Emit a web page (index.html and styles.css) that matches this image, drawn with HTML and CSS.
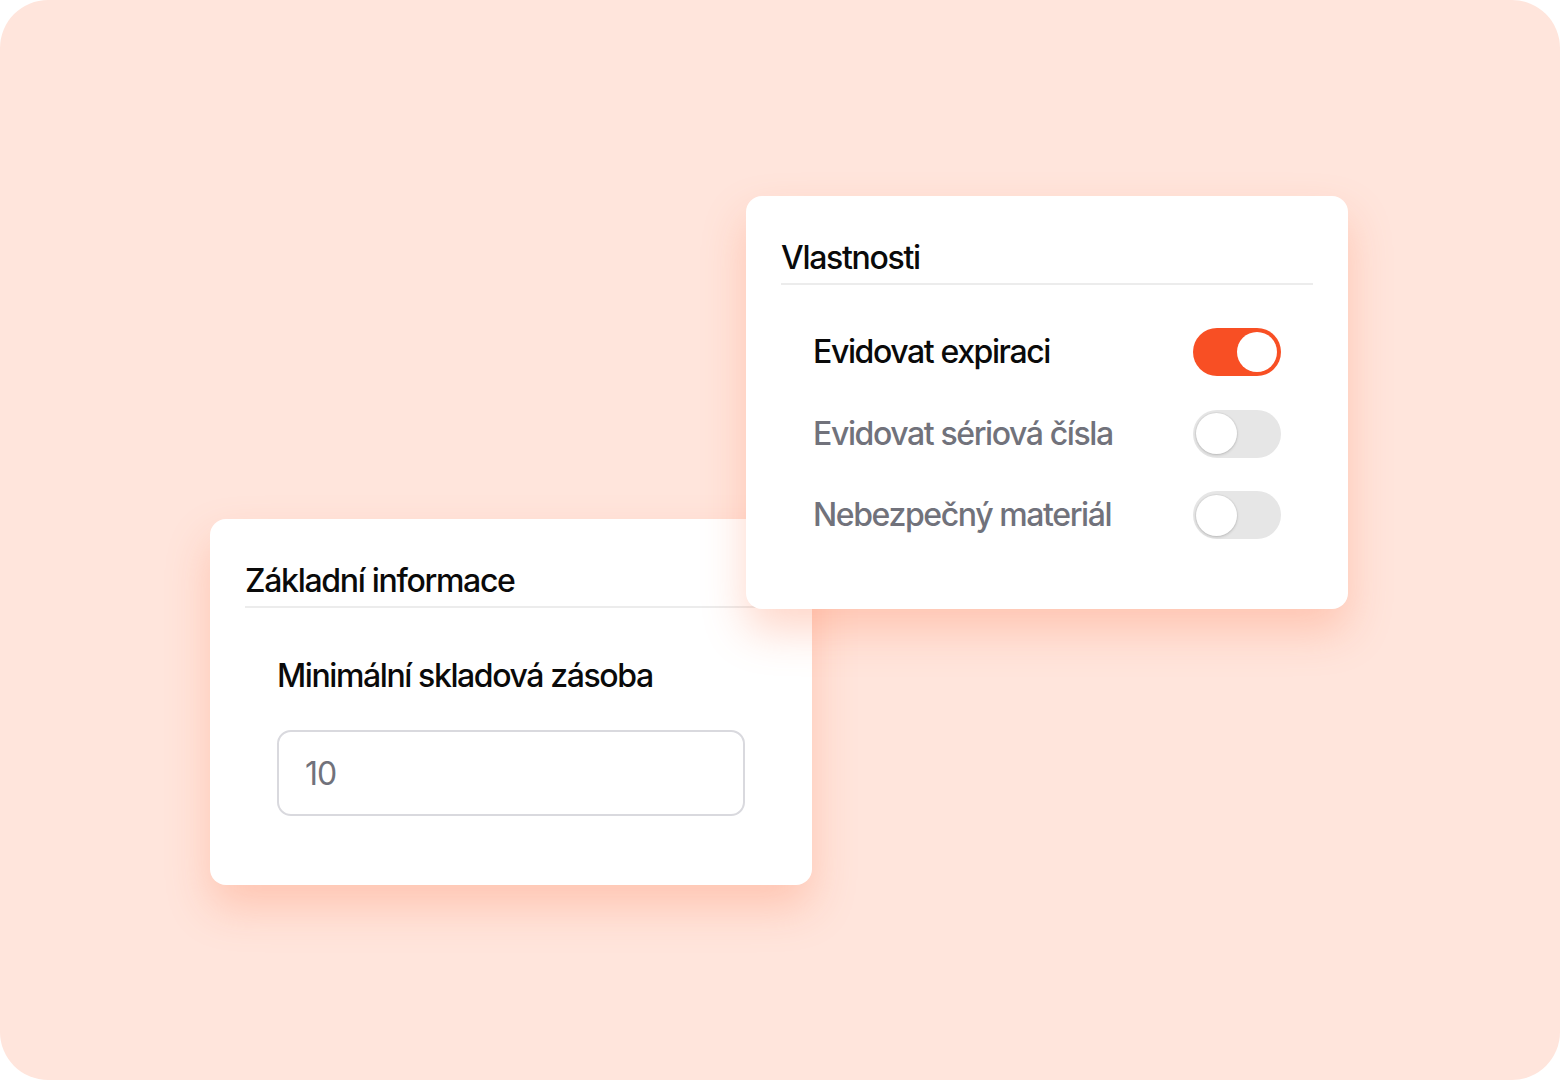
FILE: index.html
```html
<!DOCTYPE html>
<html lang="cs">
<head>
<meta charset="utf-8">
<title>Nastavení</title>
<link rel="stylesheet" href="styles.css">
</head>
<body>
<div class="bg">
  <div class="stage">
    <section class="card card-basic">
      <h2 class="card-title">Základní informace</h2>
      <div class="field">
        <label class="field-label" for="minstock">Minimální skladová zásoba</label>
        <div class="input" id="minstock">10</div>
      </div>
    </section>
    <section class="card card-props">
      <h2 class="card-title">Vlastnosti</h2>
      <div class="rows">
        <div class="row">
          <span class="row-label active">Evidovat expiraci</span>
          <span class="toggle on"><span class="knob"></span></span>
        </div>
        <div class="row">
          <span class="row-label">Evidovat sériová čísla</span>
          <span class="toggle"><span class="knob"></span></span>
        </div>
        <div class="row">
          <span class="row-label">Nebezpečný materiál</span>
          <span class="toggle"><span class="knob"></span></span>
        </div>
      </div>
    </section>
  </div>
</div>
</body>
</html>
```

FILE: styles.css
```css
html, body {
  margin: 0;
  padding: 0;
  background: #ffffff;
}
body {
  font-family: Inter, "Noto Sans", "Liberation Sans", sans-serif;
  -webkit-font-smoothing: antialiased;
}
.bg {
  width: 1560px;
  height: 1080px;
  border-radius: 48px;
  background: #ffe5dc;
  overflow: hidden;
}
.stage {
  display: grid;
}
.card {
  grid-area: 1 / 1;
  width: 602px;
  box-sizing: border-box;
  background: #ffffff;
  border-radius: 16px;
  padding: 0 35px;
  box-shadow: 0 22px 44px rgba(255, 130, 90, 0.32);
  align-self: start;
}
.card-basic {
  margin-left: 210px;
  margin-top: 519px;
  height: 366px;
}
.card-props {
  margin-left: 746px;
  margin-top: 196px;
  height: 413px;
}
.card-title {
  margin: 0;
  padding-top: 42px;
  padding-bottom: 5px;
  font-size: 32px;
  line-height: 40px;
  font-weight: 450;
  letter-spacing: -1.3px;
  color: #0a0a0a;
  border-bottom: 2px solid #ececec;
}
.field {
  padding: 48px 32px 0;
  display: flex;
  flex-direction: column;
  gap: 34px;
}
.field-label {
  font-size: 32px;
  line-height: 40px;
  font-weight: 450;
  letter-spacing: -1.4px;
  color: #0a0a0a;
}
.input {
  height: 86px;
  box-sizing: border-box;
  border: 2px solid #d9d9de;
  border-radius: 14px;
  padding: 0 26px;
  display: flex;
  align-items: center;
  font-size: 32px;
  font-weight: 400;
  letter-spacing: -1px;
  color: #71727b;
}
.rows {
  padding: 43px 32px 0;
  display: flex;
  flex-direction: column;
  gap: 33.5px;
}
.row {
  display: flex;
  align-items: center;
  justify-content: space-between;
  height: 48px;
}
.row-label {
  font-size: 32px;
  line-height: 40px;
  font-weight: 450;
  letter-spacing: -1.4px;
  color: #71727b;
}
.row-label.active {
  color: #0a0a0a;
}
.toggle {
  width: 88px;
  height: 48px;
  border-radius: 24px;
  background: #e6e6e6;
  display: flex;
  align-items: center;
  padding: 0 3px;
  box-sizing: border-box;
}
.toggle .knob {
  width: 41px;
  height: 41px;
  border-radius: 50%;
  background: #ffffff;
  box-shadow: 0 1px 3px rgba(0, 0, 0, 0.18), 0 0 0 1px rgba(0, 0, 0, 0.03);
}
.toggle.on {
  background: #f84f24;
  justify-content: flex-end;
  padding: 0 4px;
}
.toggle.on .knob {
  width: 40px;
  height: 40px;
  box-shadow: none;
}
```
